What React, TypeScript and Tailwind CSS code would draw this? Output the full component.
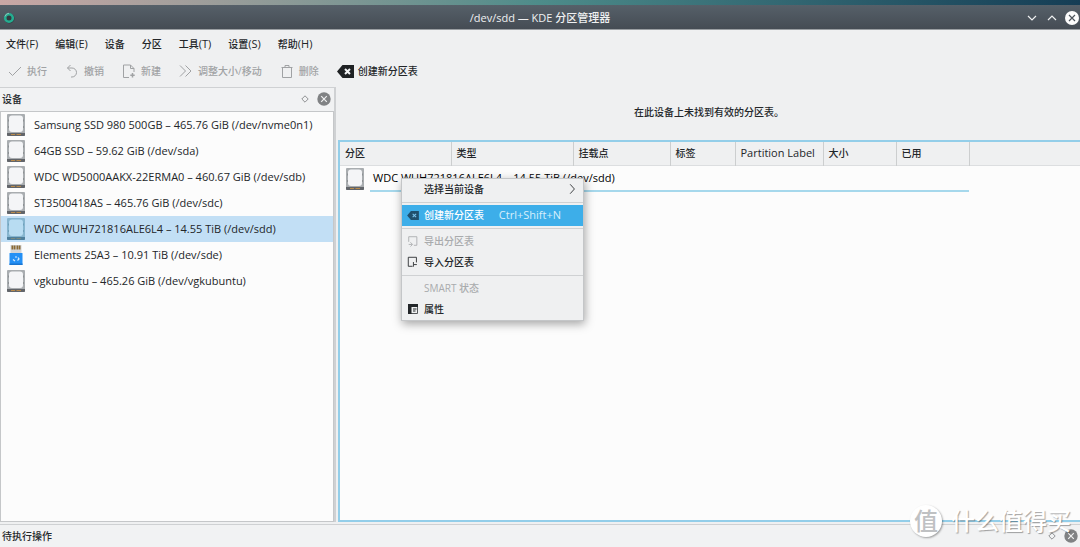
import type { ReactNode } from "react";

function DriveIcon({ selected = false }: { selected?: boolean }) {
  return (
    <svg viewBox="0 0 18 22" className="h-[22px] w-[18px] shrink-0" aria-hidden="true">
      <rect width="18" height="22" rx="1" fill={selected ? "#86b5cf" : "#a9adb0"} />
      <path d="M0 19h18v2a1 1 0 0 1-1 1H1a1 1 0 0 1-1-1z" fill={selected ? "#4f7f9c" : "#62656a"} />
      <path d="M4 20.5h4M9.500 20.5h4.500" stroke={selected ? "#7a8a80" : "#b98a4a"} strokeWidth="1" />
      <rect x="2" y="1.500" width="14" height="16.500" rx="3" fill={selected ? "#b8dcf2" : "#f4f5f7"} />
      <path d="M1.500 5.500v2M1.500 12v2M16.500 5.500v2M16.500 12v2" stroke={selected ? "#6f9fba" : "#8d9194"} strokeWidth="1" />
    </svg>
  );
}

function UsbIcon() {
  return (
    <svg viewBox="0 0 18 22" className="h-[22px] w-[18px] shrink-0" aria-hidden="true">
      <rect x="3.500" y="1" width="11" height="9" fill="#d3d5d8" />
      <path d="M4.500 1.500h2v4h-2zM7 1.500h1.500v4H7zM9.500 1.500H11v4H9.500zM11.500 1.500h2v4h-2z" fill="#8b6a33" />
      <rect x="2.500" y="9" width="13" height="12" rx="0.500" fill="#2490f5" />
      <path d="M2.500 19.500h13v1.500h-13z" fill="#1a75d0" />
      <path d="M6 15.500l2 1.500M8 13h2M11 13.500l1 1.500-1.500 1.500" stroke="#d8ecff" strokeWidth="1.200" fill="none" />
    </svg>
  );
}

function LineIcon({ children, small = false }: { children: ReactNode; small?: boolean }) {
  return (
    <svg
      viewBox="0 0 14 14"
      className={small ? "h-3 w-3 shrink-0" : "h-[14px] w-[14px] shrink-0"}
      fill="none"
      stroke="currentColor"
      strokeWidth="1"
      aria-hidden="true"
    >
      {children}
    </svg>
  );
}

function ClearIcon({ small = false }: { small?: boolean }) {
  return (
    <svg viewBox="0 0 17 13" className={small ? "h-[9px] w-3 shrink-0" : "h-[13px] w-[17px] shrink-0"} aria-hidden="true">
      <path d="M0 6.500L5.500 0H17v13H5.500z" fill={small ? "#20506e" : "#1f2224"} />
      <path d="M8 4l5 5M13 4l-5 5" stroke={small ? "#7cc4ee" : "#f4f5f6"} strokeWidth={small ? "1.500" : "2"} />
    </svg>
  );
}

function PanelButtons({ name }: { name: string }) {
  return (
    <div className="flex items-center gap-2">
      <button type="button" aria-label={`${name} 浮动`} className="text-[#8f9193]">
        <svg viewBox="0 0 8 8" className="h-2 w-2" fill="none" stroke="currentColor" aria-hidden="true">
          <path d="M4 .8L7.200 4 4 7.200.8 4z" />
        </svg>
      </button>
      <button type="button" aria-label={`${name} 关闭`}>
        <svg viewBox="0 0 14 14" className="h-[14px] w-[14px]" aria-hidden="true">
          <circle cx="7" cy="7" r="6.700" fill="#808284" />
          <path d="M4.200 4.200l5.600 5.600M9.800 4.200L4.200 9.800" stroke="#f0f1f2" strokeWidth="1.200" />
        </svg>
      </button>
    </div>
  );
}

const menus: [string, string][] = [
  ["文件", "(F)"],
  ["编辑", "(E)"],
  ["设备", ""],
  ["分区", ""],
  ["工具", "(T)"],
  ["设置", "(S)"],
  ["帮助", "(H)"],
];

const tools: { label: string; icon: ReactNode }[] = [
  { label: "执行", icon: <path d="M1 8l3.500 3.500L13 3" /> },
  { label: "撤销", icon: <path d="M5.500 1L2.500 4l3 3M2.500 4H7a4.500 4.500 0 0 1 0 9H6" /> },
  {
    label: "新建",
    icon: (
      <>
        <path d="M7 13.500H1.500V1H8.500l3.500 3.500V8M8.500 1v3.500H12" />
        <path d="M10.500 9v4.500M8.300 11.200h4.400" strokeWidth="1.500" />
      </>
    ),
  },
  { label: "调整大小/移动", icon: <path d="M1 1.500L6.500 7 1 12.500M6.500 1.500L12 7l-5.500 5.500" /> },
  { label: "删除", icon: <path d="M1.500 3.500h11M5 3.500v-2h4v2M2.500 3.500v10h9v-10" /> },
];

const devices = [
  { name: "Samsung SSD 980 500GB – 465.76 GiB (/dev/nvme0n1)" },
  { name: "64GB SSD – 59.62 GiB (/dev/sda)" },
  { name: "WDC WD5000AAKX-22ERMA0 – 460.67 GiB (/dev/sdb)" },
  { name: "ST3500418AS – 465.76 GiB (/dev/sdc)" },
  { name: "WDC WUH721816ALE6L4 – 14.55 TiB (/dev/sdd)", selected: true },
  { name: "Elements 25A3 – 10.91 TiB (/dev/sde)", usb: true },
  { name: "vgkubuntu – 465.26 GiB (/dev/vgkubuntu)" },
];

function MenuItem({
  label,
  icon,
  disabled = false,
  active = false,
  end,
}: {
  label: string;
  icon?: ReactNode;
  disabled?: boolean;
  active?: boolean;
  end?: ReactNode;
}) {
  const tone = disabled ? "text-[#a9abad]" : active ? "bg-[#3daee9] text-white" : "text-[#232629]";
  return (
    <button
      type="button"
      role="menuitem"
      disabled={disabled}
      className={`flex h-[21px] w-full items-center pr-[6px] pl-[5px] text-left ${tone}`}
    >
      <span className="mr-[5px] flex w-3 shrink-0">{icon}</span>
      <span className="flex-1">{label}</span>
      {end}
    </button>
  );
}

function Separator() {
  return <div role="separator" className="my-[2px] h-px bg-[#cfd1d3]" />;
}

function ContextMenu() {
  return (
    <div
      role="menu"
      className="absolute top-3 left-[61px] z-10 w-[183px] border border-[#c4c6c8] bg-[#eff0f1] text-[10px] font-medium shadow-[1px_3px_9px_rgba(0,0,0,0.35)]"
    >
      <MenuItem
        label="选择当前设备"
        end={
          <LineIcon small>
            <path d="M6 1.500L11 7l-5 5.500" />
          </LineIcon>
        }
      />
      <Separator />
      <MenuItem
        label="创建新分区表"
        active
        icon={<ClearIcon small />}
        end={<span className="mr-4 text-[11px] font-normal text-[#d8effb]">Ctrl+Shift+N</span>}
      />
      <Separator />
      <MenuItem
        label="导出分区表"
        disabled
        icon={
          <LineIcon small>
            <path d="M2 8V2h9.500v10H8M2 11h4M4 8.500L6.500 11 4 13.500" />
          </LineIcon>
        }
      />
      <MenuItem
        label="导入分区表"
        icon={
          <LineIcon small>
            <path d="M6.500 12H1.500V1.500h9.500V7.500M11.500 10H7.500v-3M7.500 12.500V10" />
          </LineIcon>
        }
      />
      <Separator />
      <MenuItem label="SMART 状态" disabled />
      <MenuItem
        label="属性"
        icon={
          <svg viewBox="0 0 12 12" className="h-3 w-3" aria-hidden="true">
            <path d="M1.500 1.500h9v9h-9z" fill="#eff0f1" stroke="#55585b" />
            <path d="M1 1h10v3H1zM1 4h3.500v7H1zM6 5.500h3.500v1H6zM6 7.500h2.500v1H6z" fill="#232629" />
          </svg>
        }
      />
    </div>
  );
}

export default function App() {
  return (
    <div className="flex min-h-screen flex-col bg-[#eff0f1] font-['Open_Sans','Noto_Sans_CJK_SC',sans-serif] text-[10px] leading-4 text-[#232629]">
      <div className="h-[5px] bg-linear-to-r from-[#c9a7a5] via-[#4d8c8a] to-[#153d55]" />
      <header className="flex h-[25px] items-center border-b border-[#9a9ea2] bg-linear-to-b from-[#566069] to-[#454c54] px-[3px] pt-px text-[#eff0f1]">
        <div className="flex flex-1">
          <svg viewBox="0 0 12 12" className="h-3 w-3" aria-hidden="true">
            <circle cx="6.500" cy="6.500" r="5" fill="#343b40" />
            <circle cx="6" cy="6" r="3.800" fill="none" stroke="#25ad91" strokeWidth="2.600" />
            <path d="M2 4.500A4.500 4.500 0 0 1 6 1.200" fill="none" stroke="#8cc8bc" />
          </svg>
        </div>
        <h1 className="text-[11px] font-medium">/dev/sdd — KDE 分区管理器</h1>
        <div className="flex flex-1 items-center justify-end gap-[6px]">
          <button type="button" aria-label="最小化">
            <LineIcon>
              <path d="M3 5l4 4 4-4" strokeWidth="1.200" />
            </LineIcon>
          </button>
          <button type="button" aria-label="最大化">
            <LineIcon>
              <path d="M3 9l4-4 4 4" strokeWidth="1.200" />
            </LineIcon>
          </button>
          <button type="button" aria-label="关闭" className="-mr-[2px]">
            <svg viewBox="0 0 14 14" className="h-[14px] w-[14px]" aria-hidden="true">
              <circle cx="7" cy="7" r="7" fill="#fcfcfc" />
              <path d="M4 4l6 6M10 4l-6 6" stroke="#4d545b" strokeWidth="1.200" />
            </svg>
          </button>
        </div>
      </header>

      <nav className="flex h-7 items-center gap-[17px] px-[6px]">
        {menus.map(([label, key]) => (
          <button type="button" key={label} className="font-medium">
            {label}
            {key && <span className="text-[11px] font-normal">{key}</span>}
          </button>
        ))}
      </nav>

      <div role="toolbar" className="flex h-[29px] items-center gap-[18px] px-2 pb-[3px]">
        {tools.map((tool) => (
          <button type="button" disabled key={tool.label} className="flex items-center gap-[5px] font-medium text-[#a0a2a4]">
            <LineIcon>{tool.icon}</LineIcon>
            {tool.label}
          </button>
        ))}
        <button type="button" className="flex items-center gap-1 font-medium">
          <ClearIcon />
          创建新分区表
        </button>
      </div>

      <main className="flex flex-1 gap-[2px]">
        <aside className="flex w-[336px] shrink-0 flex-col border-t border-r-2 border-[#cfd1d3] bg-[#f1f2f3]">
          <div className="flex h-[23px] items-center justify-between pr-[3px] pb-[2px] pl-[2px]">
            <h2 className="font-medium">设备</h2>
            <PanelButtons name="设备" />
          </div>
          <ul className="flex-1 border border-[#c5c7c9] bg-[#fcfcfc] text-[11px]">
            {devices.map((device) => (
              <li
                key={device.name}
                className={`flex h-[26px] items-center gap-[9px] pl-[6px] ${device.selected ? "bg-[#c2dff5]" : ""}`}
              >
                {device.usb ? <UsbIcon /> : <DriveIcon selected={device.selected} />}
                {device.name}
              </li>
            ))}
          </ul>
        </aside>

        <section className="flex min-w-0 flex-1 flex-col">
          <p className="flex h-[53px] items-center justify-center pb-1 font-medium">在此设备上未找到有效的分区表。</p>
          <div className="flex-1 border-2 border-r-0 border-[#93cee9] bg-[#fcfcfc]">
            <table className="w-full table-fixed border-collapse text-left">
              <colgroup>
                <col className="w-[111px]" />
                <col className="w-[122px]" />
                <col className="w-[97px]" />
                <col className="w-[65px]" />
                <col className="w-[88px]" />
                <col className="w-[73px]" />
                <col className="w-[73px]" />
                <col />
              </colgroup>
              <thead>
                <tr className="h-[23px] border-b border-[#dcdee0] bg-[#eff0f1]">
                  {["分区", "类型", "挂载点", "标签", "Partition Label", "大小", "已用"].map((title) => (
                    <th
                      key={title}
                      scope="col"
                      className={`border-r border-[#cccecf] p-0 pl-[5px] whitespace-nowrap ${title === "Partition Label" ? "text-[11px] font-normal" : "font-medium"}`}
                    >
                      {title}
                    </th>
                  ))}
                  <th className="p-0" aria-hidden="true" />
                </tr>
              </thead>
              <tbody>
                <tr>
                  <td colSpan={7} className="p-0">
                    <div className="relative flex h-[26px] gap-[6px] pl-[6px] text-[11px] text-black">
                      <div className="flex items-center">
                        <DriveIcon />
                      </div>
                      <span className="flex flex-1 items-center border-b-2 border-b-[#a6d8ec] pl-[3px]">
                        WDC WUH721816ALE6L4 – 14.55 TiB (/dev/sdd)
                      </span>
                      <ContextMenu />
                    </div>
                  </td>
                  <td className="p-0" />
                </tr>
              </tbody>
            </table>
          </div>
        </section>
      </main>

      <footer className="relative mt-[2px] flex h-[23px] items-center justify-between border-t border-[#cfd1d3] bg-[#f1f2f3] pr-[2px] pl-[2px]">
        <h2 className="font-medium">待执行操作</h2>
        <PanelButtons name="待执行操作" />
        <div className="pointer-events-none absolute right-[9px] bottom-[10px] flex items-center gap-[9px] whitespace-nowrap">
          <span className="flex h-8 w-8 items-center justify-center rounded-full bg-white text-[24px] leading-8 font-medium text-[#bfc1c3] shadow-[1px_1px_2px_rgba(0,0,0,0.35)]">
            值
          </span>
          <span className="text-[24px] leading-8 font-medium text-white [text-shadow:1px_1px_1px_rgba(0,0,0,0.35)]">
            什么值得买
          </span>
        </div>
      </footer>
    </div>
  );
}
